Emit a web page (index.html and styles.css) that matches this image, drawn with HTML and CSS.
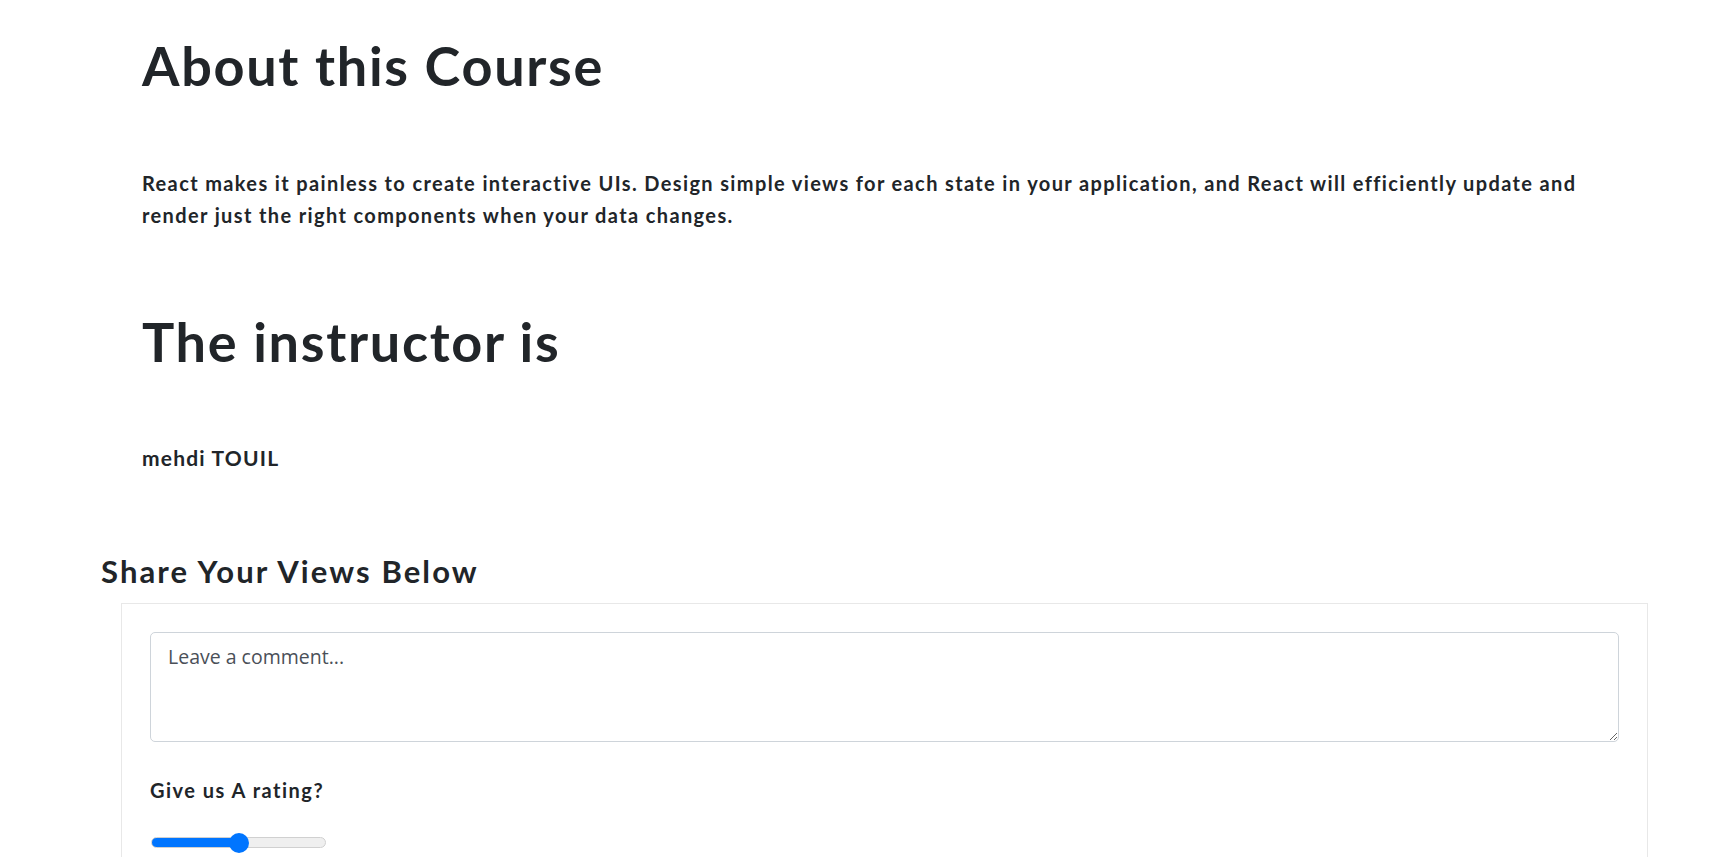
FILE: index.html
```html
<!DOCTYPE html>
<html lang="en">
<head>
<meta charset="utf-8">
<title>About this Course</title>
<link rel="stylesheet" href="styles.css">
</head>
<body>
<main class="page">
  <section class="about">
    <h1 class="display">About this Course</h1>
    <p class="lead">React makes it painless to create interactive UIs. Design simple views for each state in your application, and React will efficiently update and render just the right components when your data changes.</p>
    <h1 class="display instructor-title">The instructor is</h1>
    <p class="lead instructor">mehdi TOUIL</p>
  </section>
  <section class="comments">
    <h2 class="comments-title">Share Your Views Below</h2>
    <form class="card">
      <textarea class="comment-box" placeholder="Leave a comment..."></textarea>
      <label class="rating-label" for="rating">Give us A rating?</label>
      <input class="rating" id="rating" type="range" min="0" max="100" value="50">
    </form>
  </section>
</main>
</body>
</html>
```
FILE: styles.css
```css
* { box-sizing: border-box; }

html, body {
  margin: 0;
  padding: 0;
  background: #ffffff;
}

body {
  font-family: "Lato", "Liberation Sans", sans-serif;
  color: #212529;
}

.page {
  padding-top: 34px;
}

.about {
  padding-left: 142px;
  width: 1610px;
}

.display {
  margin: 0;
  font-size: 54px;
  font-weight: 700;
  line-height: 1.2;
  letter-spacing: 1.7px;
}

.lead {
  margin: 68px 0 0;
  font-size: 20px;
  font-weight: 700;
  line-height: 32px;
  letter-spacing: 1.37px;
}

.instructor-title {
  margin-top: 79px;
}

.instructor {
  margin-top: 67px;
  font-size: 21px;
  letter-spacing: 1.2px;
}

.comments {
  padding-top: 79px;
}

.comments-title {
  margin: 0 0 13px 101px;
  font-size: 31px;
  font-weight: 700;
  line-height: 1.2;
  letter-spacing: 2.1px;
}

.card {
  margin-left: 121px;
  width: 1527px;
  border: 1px solid #e8e8e8;
  padding: 28px 28px 60px;
  display: flex;
  flex-direction: column;
  align-items: flex-start;
}

.comment-box {
  width: 100%;
  height: 110px;
  border: 1px solid #ced4da;
  border-radius: 5px;
  padding: 9px 17px;
  font-family: "Open Sans", "Noto Sans", sans-serif;
  font-size: 19.5px;
  line-height: 1.5;
  color: #495057;
  resize: vertical;
}

.comment-box::placeholder {
  color: #4a5058;
}

.rating-label {
  margin-top: 36px;
  font-size: 20px;
  font-weight: 700;
  line-height: 1.2;
  letter-spacing: 1.5px;
}

.rating {
  -webkit-appearance: none;
  appearance: none;
  margin: 31px 0 0 1px;
  width: 175px;
  height: 20px;
  background: transparent;
  padding: 0;
}

.rating::-webkit-slider-runnable-track {
  height: 11px;
  border-radius: 6px;
  border: 1px solid #d0d0d0;
  background: linear-gradient(90deg, #0075ff 0 50%, #efefef 50% 100%);
}

.rating::-webkit-slider-thumb {
  -webkit-appearance: none;
  appearance: none;
  width: 20px;
  height: 20px;
  margin-top: -5.5px;
  border-radius: 50%;
  background: #0075ff;
  border: none;
}
```
